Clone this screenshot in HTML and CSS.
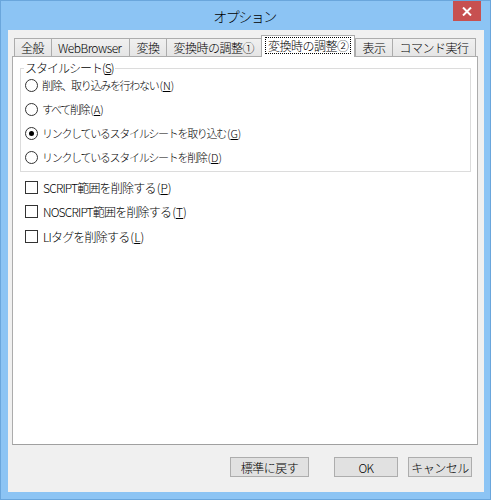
FILE: index.html
```html
<!DOCTYPE html>
<html lang="ja">

<head>
    <meta charset="UTF-8">
    <title>オプション</title>
    <link rel="stylesheet" href="styles.css">
</head>

<body>
    <div class="window">
        <div class="titlebar">
            <span></span>
            <span class="title">オプション</span>
            <button class="close" type="button">
                <svg width="10" height="9" viewBox="0 0 10 9">
                    <path d="M1 0.5 L9 8.5 M9 0.5 L1 8.5" stroke="#fff" stroke-width="2" />
                </svg>
            </button>
        </div>
        <div class="client">
            <ul class="tabs">
                <li class="tab">全般</li>
                <li class="tab">WebBrowser</li>
                <li class="tab">変換</li>
                <li class="tab">変換時の調整①</li>
                <li class="tab active"><span class="focus">変換時の調整②</span></li>
                <li class="tab">表示</li>
                <li class="tab">コマンド実行</li>
            </ul>
            <div class="panel">
                <fieldset class="group">
                    <legend>スタイルシート(<u>S</u>)</legend>
                    <div class="row"><span class="radio"></span>削除、取り込みを行わない<span class="key">(<u>N</u>)</span></div>
                    <div class="row"><span class="radio"></span>すべて削除<span class="key">(<u>A</u>)</span></div>
                    <div class="row"><span class="radio checked"></span>リンクしているスタイルシートを取り込む<span class="key">(<u>G</u>)</span></div>
                    <div class="row"><span class="radio"></span>リンクしているスタイルシートを削除<span class="key">(<u>D</u>)</span></div>
                </fieldset>
                <div class="checks">
                    <div class="row"><span class="check"></span>SCRIPT範囲を削除する<span class="key">(<u>P</u>)</span></div>
                    <div class="row"><span class="check"></span>NOSCRIPT範囲を削除する<span class="key">(<u>T</u>)</span></div>
                    <div class="row"><span class="check"></span>LIタグを削除する<span class="key">(<u>L</u>)</span></div>
                </div>
            </div>
            <div class="buttons">
                <button class="btn btn-wide" type="button">標準に戻す</button>
                <button class="btn" type="button">OK</button>
                <button class="btn" type="button">キャンセル</button>
            </div>
        </div>
    </div>
</body>

</html>
```

FILE: styles.css
```css
* {
    box-sizing: border-box;
}

body {
    margin: 0;
    font-family: "Noto Sans CJK JP", sans-serif;
    font-size: 11px;
    font-weight: 300;
    color: #000;
}

.window {
    width: 491px;
    height: 500px;
    background: #8cc4f4;
    border: 1px solid #6aa6dc;
    padding: 0 6px 7px 7px;
    display: flex;
    flex-direction: column;
}

.titlebar {
    height: 29px;
    display: grid;
    grid-template-columns: 1fr auto 1fr;
    align-items: start;
    padding-right: 3px;
}

.title {
    font-size: 14px;
    line-height: 30px;
    letter-spacing: -1.5px;
}

.close {
    justify-self: end;
    width: 28px;
    height: 20px;
    border: 0;
    padding: 0;
    background: #c75050;
    display: flex;
    align-items: center;
    justify-content: center;
}

.client {
    flex: 1;
    background: #f0f0f0;
    padding: 5px 6px 15px 4px;
    display: flex;
    flex-direction: column;
}

/* タブ */
.tabs {
    list-style: none;
    margin: 0;
    padding: 0 0 0 2px;
    height: 21px;
    display: flex;
    align-items: flex-end;
    position: relative;
    z-index: 1;
}

.tab {
    height: 18px;
    line-height: 17px;
    padding: 0 7px 0 6px;
    border: 1px solid #acacac;
    border-bottom: 0;
    margin-right: -1px;
    background: linear-gradient(#f0f0f0, #e5e5e5);
    font-size: 12px;
    letter-spacing: -0.5px;
    white-space: nowrap;
}

.tab:nth-child(2),
.tab:nth-child(4) {
    padding-right: 8px;
}

.tab.active {
    height: 22px;
    margin: 0 0 -1px -1px;
    padding: 1px 3px 0 3px;
    background: #fff;
    position: relative;
    z-index: 1;
}

.focus {
    display: block;
    border: 1px dotted #000;
    line-height: 15px;
    padding: 0 2px 0 2px;
}

.panel {
    flex: 1;
    background: #fff;
    border: 1px solid #acacac;
    border-bottom-color: #a0a0a0;
    padding: 4px 6px 0 7px;
}

/* グループ */
.group {
    border: 1px solid #dcdcdc;
    margin: 0;
    padding: 0 0 2px 4px;
}

.group legend {
    padding: 0 1px;
    margin-left: -1px;
    line-height: 14px;
    font-size: 12px;
    letter-spacing: -1px;
}

.row {
    height: 24px;
    display: flex;
    align-items: center;
    font-size: 11px;
    letter-spacing: -1.3px;
    white-space: nowrap;
}

.group .row:first-of-type {
    margin-top: -2px;
}

.key {
    letter-spacing: 0;
    margin-left: 1px;
}

.radio {
    width: 13px;
    height: 13px;
    border: 1px solid #333;
    border-radius: 50%;
    background: #fff;
    margin-right: 4px;
    display: flex;
    align-items: center;
    justify-content: center;
}

.radio.checked::after {
    content: "";
    width: 5px;
    height: 5px;
    border-radius: 50%;
    background: #000;
}

.checks {
    margin-top: 3px;
    padding-left: 5px;
}

.checks .row {
    height: 24.5px;
    font-size: 12px;
    letter-spacing: -0.8px;
}

.check {
    width: 13px;
    height: 13px;
    border: 1px solid #333;
    background: #fff;
    margin-right: 5px;
}

u {
    text-decoration: underline;
}

/* ボタン */
.buttons {
    margin-top: 12px;
    display: flex;
    justify-content: flex-end;
    padding-right: 6px;
}

.btn {
    width: 64px;
    height: 20px;
    margin-left: 10px;
    padding: 0;
    border: 1px solid #adadad;
    background: #e1e1e1;
    font-family: inherit;
    font-size: 12px;
    font-weight: 300;
    letter-spacing: -0.5px;
    color: #000;
}

.btn-wide {
    width: 79px;
    margin-right: 15px;
}
```
